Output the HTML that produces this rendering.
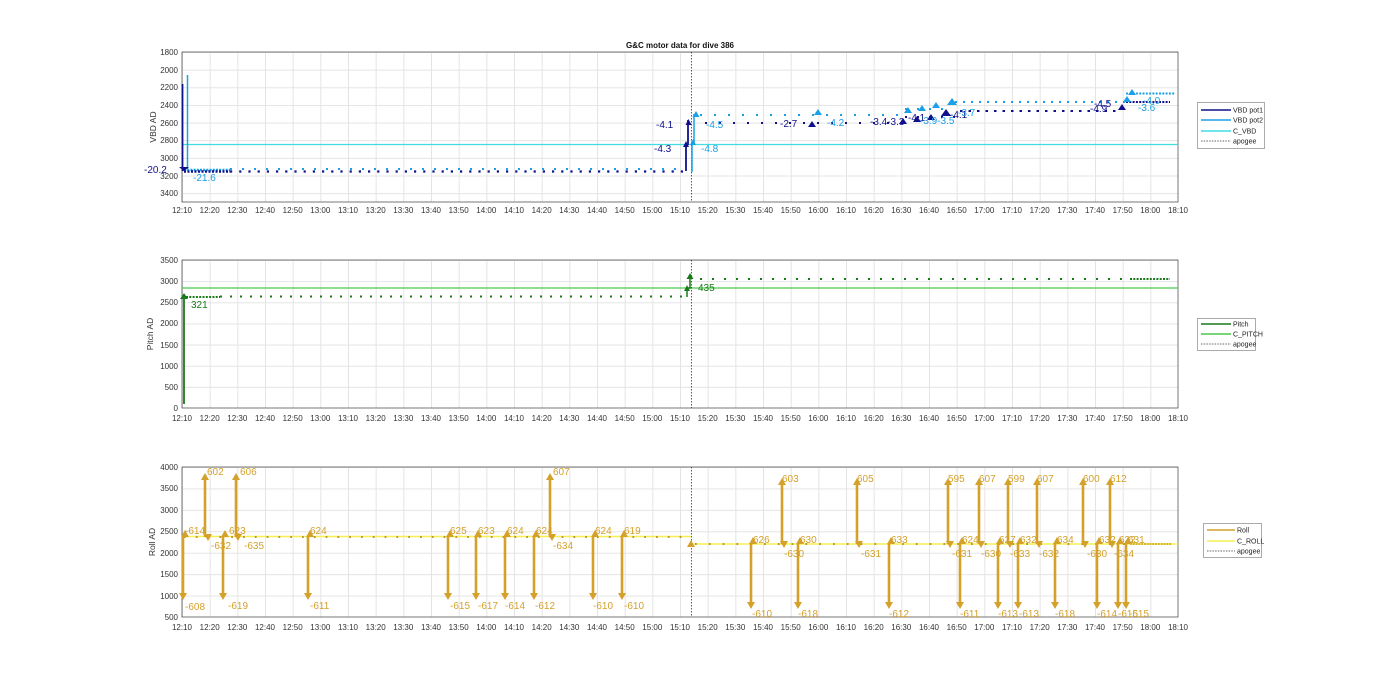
<!DOCTYPE html>
<html><head><meta charset="utf-8"><style>
html,body{margin:0;padding:0;background:#fff;width:1400px;height:693px;overflow:hidden}
svg{display:block;font-family:"Liberation Sans",Arial,sans-serif}
.t{font-size:8px;fill:#333;text-anchor:middle}
.yl{font-size:8px;fill:#333;text-anchor:end}
.lg{font-size:7px;fill:#222}
.gl{font-size:10px;fill:#d4a12a}
</style></head><body>
<svg width="1400" height="693" viewBox="0 0 1400 693">
<defs>
<pattern id="vg" x="182" y="0" width="27.667" height="700" patternUnits="userSpaceOnUse"><line x1="0.5" y1="0" x2="0.5" y2="700" stroke="#e4e4e4" stroke-width="1"/></pattern>
<pattern id="hg1" x="0" y="52" width="1400" height="17.647" patternUnits="userSpaceOnUse"><line x1="0" y1="0.5" x2="1400" y2="0.5" stroke="#e4e4e4"/></pattern>
<pattern id="hg2" x="0" y="260" width="1400" height="21.14" patternUnits="userSpaceOnUse"><line x1="0" y1="0.5" x2="1400" y2="0.5" stroke="#e4e4e4"/></pattern>
<pattern id="hg3" x="0" y="467" width="1400" height="21.43" patternUnits="userSpaceOnUse"><line x1="0" y1="0.5" x2="1400" y2="0.5" stroke="#e4e4e4"/></pattern>
</defs>

<!-- ===== TOP AXES ===== -->
<rect x="182" y="52" width="996" height="150" fill="url(#vg)"/>
<rect x="182" y="52" width="996" height="150" fill="url(#hg1)"/>
<rect x="182" y="52" width="996" height="150" fill="none" stroke="#555" stroke-width="0.8"/>
<text x="680" y="48" font-size="8" font-weight="bold" text-anchor="middle" fill="#111">G&amp;C motor data for dive 386</text>
<g class="yl">
<text x="178" y="55">1800</text><text x="178" y="73">2000</text><text x="178" y="90">2200</text><text x="178" y="108">2400</text><text x="178" y="126">2600</text><text x="178" y="143">2800</text><text x="178" y="161">3000</text><text x="178" y="179">3200</text><text x="178" y="196">3400</text>
</g>
<text transform="translate(156,127) rotate(-90)" font-size="8.5" text-anchor="middle" fill="#333">VBD AD</text>
<g class="t">
<text x="182" y="213">12:10</text><text x="209.7" y="213">12:20</text><text x="237.3" y="213">12:30</text><text x="265" y="213">12:40</text><text x="292.7" y="213">12:50</text><text x="320.3" y="213">13:00</text><text x="348" y="213">13:10</text><text x="375.7" y="213">13:20</text><text x="403.3" y="213">13:30</text><text x="431" y="213">13:40</text><text x="458.7" y="213">13:50</text><text x="486.3" y="213">14:00</text><text x="514" y="213">14:10</text><text x="541.7" y="213">14:20</text><text x="569.3" y="213">14:30</text><text x="597" y="213">14:40</text><text x="624.7" y="213">14:50</text><text x="652.3" y="213">15:00</text><text x="680" y="213">15:10</text><text x="707.7" y="213">15:20</text><text x="735.3" y="213">15:30</text><text x="763" y="213">15:40</text><text x="790.7" y="213">15:50</text><text x="818.3" y="213">16:00</text><text x="846" y="213">16:10</text><text x="873.7" y="213">16:20</text><text x="901.3" y="213">16:30</text><text x="929" y="213">16:40</text><text x="956.7" y="213">16:50</text><text x="984.3" y="213">17:00</text><text x="1012" y="213">17:10</text><text x="1039.7" y="213">17:20</text><text x="1067.3" y="213">17:30</text><text x="1095" y="213">17:40</text><text x="1122.7" y="213">17:50</text><text x="1150.3" y="213">18:00</text><text x="1178" y="213">18:10</text>
</g>
<line x1="182" y1="144.5" x2="1178" y2="144.5" stroke="#40dce0" stroke-width="1.2"/>
<line x1="691.5" y1="52" x2="691.5" y2="202" stroke="#333" stroke-width="0.8" stroke-dasharray="1.5 1.5"/>
<!-- dots -->
<line x1="184" y1="170" x2="230" y2="170" stroke="#1aa0e6" stroke-width="2.5" stroke-dasharray="2 1.2"/>
<line x1="184" y1="171.5" x2="230" y2="171.5" stroke="#10108c" stroke-width="2.5" stroke-dasharray="2 1.5"/>
<line x1="230" y1="169" x2="686" y2="169" stroke="#1aa0e6" stroke-width="2" stroke-dasharray="2 10"/>
<line x1="230" y1="171.5" x2="686" y2="171.5" stroke="#10108c" stroke-width="2.2" stroke-dasharray="2.2 7"/>
<line x1="700" y1="115" x2="905" y2="115" stroke="#1aa0e6" stroke-width="2" stroke-dasharray="2 12"/>
<line x1="905" y1="109" x2="950" y2="109" stroke="#1aa0e6" stroke-width="2" stroke-dasharray="2 10"/>
<line x1="955" y1="102" x2="1126" y2="102" stroke="#1aa0e6" stroke-width="2" stroke-dasharray="2 6"/>
<line x1="1126" y1="93.5" x2="1175" y2="93.5" stroke="#1aa0e6" stroke-width="2" stroke-dasharray="2 1.3"/>
<line x1="705" y1="123" x2="905" y2="123" stroke="#10108c" stroke-width="2" stroke-dasharray="2 12"/>
<line x1="905" y1="117" x2="960" y2="117" stroke="#10108c" stroke-width="2" stroke-dasharray="2 10"/>
<line x1="960" y1="111" x2="1120" y2="111" stroke="#10108c" stroke-width="2" stroke-dasharray="2.5 6"/>
<line x1="1126" y1="102" x2="1170" y2="102" stroke="#10108c" stroke-width="2" stroke-dasharray="2 1.3"/>
<!-- vertical jumps -->
<path d="M182.5 84V171" stroke="#10108c" stroke-width="1.8"/>
<path d="M187.5 75V171" stroke="#1aa0e6" stroke-width="1.5"/>
<path d="M184 171l-5-4h10z" fill="#10108c"/>
<path d="M686 171V144h2V120" stroke="#10108c" stroke-width="1.8" fill="none"/>
<path d="M686 141l-3 6h6zM688.5 119l-3 6h6z" fill="#10108c"/>
<path d="M692 172V142h2V114" stroke="#1aa0e6" stroke-width="1.5" fill="none"/>
<path d="M696 111l-3.5 6h7zM693 139l-3 6h6z" fill="#1aa0e6"/>
<g fill="#10108c"><path d="M812 121l-4 6h8zM903 118l-4 6h8zM917 116l-4 6h8zM931 114l-4 6h8zM946 109l-5 7h10zM1122 104l-4 6h8z"/></g>
<g fill="#1aa0e6"><path d="M818 109l-4 6h8zM908 107l-4 6h8zM922 105l-4 6h8zM936 102l-4 6h8zM952 98l-5 7h10zM1127 96l-4 6h8zM1132 89l-4 6h8z"/></g>
<g font-size="10">
<text x="144" y="173" fill="#10108c">-20.2</text>
<text x="193" y="181" fill="#1aa0e6">-21.6</text>
<text x="656" y="128" fill="#10108c">-4.1</text>
<text x="654" y="152" fill="#10108c">-4.3</text>
<text x="706" y="128" fill="#1aa0e6">-4.5</text>
<text x="701" y="152" fill="#1aa0e6">-4.8</text>
<text x="780" y="127" fill="#10108c">-2.7</text>
<text x="827" y="126" fill="#1aa0e6">-4.2</text>
<text x="870" y="125" fill="#10108c">-3.4-3.3</text>
<text x="908" y="121" fill="#10108c">-4.1</text>
<text x="920" y="124" fill="#1aa0e6">-3.9-3.5</text>
<text x="950" y="118" fill="#10108c">-4.1</text>
<text x="958" y="116" fill="#1aa0e6">-3.7</text>
<text x="1094" y="107" fill="#10108c">-4.5</text>
<text x="1090" y="112" fill="#10108c">-4.9</text>
<text x="1143" y="104" fill="#1aa0e6">-4.0</text>
<text x="1138" y="111" fill="#1aa0e6">-3.6</text>
</g>
<!-- legend 1 -->
<rect x="1197.5" y="102.5" width="67" height="46" fill="#fff" stroke="#888" stroke-width="0.7"/>
<line x1="1201" y1="110" x2="1231" y2="110" stroke="#10108c" stroke-width="1.5"/>
<line x1="1201" y1="120" x2="1231" y2="120" stroke="#1aa0e6" stroke-width="1.5"/>
<line x1="1201" y1="131" x2="1231" y2="131" stroke="#40dce0" stroke-width="1.5"/>
<line x1="1201" y1="141" x2="1231" y2="141" stroke="#333" stroke-width="0.8" stroke-dasharray="1.5 1.2"/>
<text class="lg" x="1233" y="112.5">VBD pot1</text><text class="lg" x="1233" y="122.5">VBD pot2</text><text class="lg" x="1233" y="133.5">C_VBD</text><text class="lg" x="1233" y="143.5">apogee</text>

<!-- ===== MIDDLE AXES ===== -->
<rect x="182" y="260" width="996" height="148" fill="url(#vg)"/>
<rect x="182" y="260" width="996" height="148" fill="url(#hg2)"/>
<rect x="182" y="260" width="996" height="148" fill="none" stroke="#555" stroke-width="0.8"/>
<g class="yl">
<text x="178" y="263">3500</text><text x="178" y="284">3000</text><text x="178" y="305">2500</text><text x="178" y="326">2000</text><text x="178" y="348">1500</text><text x="178" y="369">1000</text><text x="178" y="390">500</text><text x="178" y="411">0</text>
</g>
<text transform="translate(153,334) rotate(-90)" font-size="8.5" text-anchor="middle" fill="#333">Pitch AD</text>
<g class="t">
<text x="182" y="421">12:10</text><text x="209.7" y="421">12:20</text><text x="237.3" y="421">12:30</text><text x="265" y="421">12:40</text><text x="292.7" y="421">12:50</text><text x="320.3" y="421">13:00</text><text x="348" y="421">13:10</text><text x="375.7" y="421">13:20</text><text x="403.3" y="421">13:30</text><text x="431" y="421">13:40</text><text x="458.7" y="421">13:50</text><text x="486.3" y="421">14:00</text><text x="514" y="421">14:10</text><text x="541.7" y="421">14:20</text><text x="569.3" y="421">14:30</text><text x="597" y="421">14:40</text><text x="624.7" y="421">14:50</text><text x="652.3" y="421">15:00</text><text x="680" y="421">15:10</text><text x="707.7" y="421">15:20</text><text x="735.3" y="421">15:30</text><text x="763" y="421">15:40</text><text x="790.7" y="421">15:50</text><text x="818.3" y="421">16:00</text><text x="846" y="421">16:10</text><text x="873.7" y="421">16:20</text><text x="901.3" y="421">16:30</text><text x="929" y="421">16:40</text><text x="956.7" y="421">16:50</text><text x="984.3" y="421">17:00</text><text x="1012" y="421">17:10</text><text x="1039.7" y="421">17:20</text><text x="1067.3" y="421">17:30</text><text x="1095" y="421">17:40</text><text x="1122.7" y="421">17:50</text><text x="1150.3" y="421">18:00</text><text x="1178" y="421">18:10</text>
</g>
<line x1="182" y1="288" x2="1178" y2="288" stroke="#4cc94c" stroke-width="1.2"/>
<line x1="691.5" y1="260" x2="691.5" y2="408" stroke="#333" stroke-width="0.8" stroke-dasharray="1.5 1.5"/>
<line x1="186" y1="297" x2="220" y2="297" stroke="#1a7a1a" stroke-width="2" stroke-dasharray="2 1.3"/>
<line x1="220" y1="296.5" x2="686" y2="296.5" stroke="#1a7a1a" stroke-width="2" stroke-dasharray="2 8"/>
<line x1="700" y1="279" x2="1130" y2="279" stroke="#1a7a1a" stroke-width="2" stroke-dasharray="2 10"/>
<line x1="1130" y1="279" x2="1170" y2="279" stroke="#1a7a1a" stroke-width="2" stroke-dasharray="2 1.3"/>
<path d="M184 404V297" stroke="#1a7a1a" stroke-width="1.8"/>
<path d="M184 293l-4 6h8z" fill="#1a7a1a"/>
<path d="M687 297V288h3V276" stroke="#1a7a1a" stroke-width="1.5" fill="none"/>
<path d="M687 285l-3 6h6zM690 273l-3.5 6h7z" fill="#1a7a1a"/>
<text x="191" y="308" font-size="10" fill="#1a7a1a">321</text>
<text x="698" y="291" font-size="10" fill="#1a7a1a">435</text>
<rect x="1197.5" y="318.5" width="58" height="32" fill="#fff" stroke="#888" stroke-width="0.7"/>
<line x1="1201" y1="324" x2="1231" y2="324" stroke="#1a7a1a" stroke-width="1.5"/>
<line x1="1201" y1="334" x2="1231" y2="334" stroke="#4cc94c" stroke-width="1.5"/>
<line x1="1201" y1="344" x2="1231" y2="344" stroke="#333" stroke-width="0.8" stroke-dasharray="1.5 1.2"/>
<text class="lg" x="1233" y="326.5">Pitch</text><text class="lg" x="1233" y="336.5">C_PITCH</text><text class="lg" x="1233" y="346.5">apogee</text>

<!-- ===== BOTTOM AXES ===== -->
<rect x="182" y="467" width="996" height="150" fill="url(#vg)"/>
<rect x="182" y="467" width="996" height="150" fill="url(#hg3)"/>
<rect x="182" y="467" width="996" height="150" fill="none" stroke="#555" stroke-width="0.8"/>
<g class="yl">
<text x="178" y="470">4000</text><text x="178" y="491">3500</text><text x="178" y="513">3000</text><text x="178" y="534">2500</text><text x="178" y="556">2000</text><text x="178" y="577">1500</text><text x="178" y="599">1000</text><text x="178" y="620">500</text>
</g>
<text transform="translate(155,542) rotate(-90)" font-size="8.5" text-anchor="middle" fill="#333">Roll AD</text>
<g class="t">
<text x="182" y="630">12:10</text><text x="209.7" y="630">12:20</text><text x="237.3" y="630">12:30</text><text x="265" y="630">12:40</text><text x="292.7" y="630">12:50</text><text x="320.3" y="630">13:00</text><text x="348" y="630">13:10</text><text x="375.7" y="630">13:20</text><text x="403.3" y="630">13:30</text><text x="431" y="630">13:40</text><text x="458.7" y="630">13:50</text><text x="486.3" y="630">14:00</text><text x="514" y="630">14:10</text><text x="541.7" y="630">14:20</text><text x="569.3" y="630">14:30</text><text x="597" y="630">14:40</text><text x="624.7" y="630">14:50</text><text x="652.3" y="630">15:00</text><text x="680" y="630">15:10</text><text x="707.7" y="630">15:20</text><text x="735.3" y="630">15:30</text><text x="763" y="630">15:40</text><text x="790.7" y="630">15:50</text><text x="818.3" y="630">16:00</text><text x="846" y="630">16:10</text><text x="873.7" y="630">16:20</text><text x="901.3" y="630">16:30</text><text x="929" y="630">16:40</text><text x="956.7" y="630">16:50</text><text x="984.3" y="630">17:00</text><text x="1012" y="630">17:10</text><text x="1039.7" y="630">17:20</text><text x="1067.3" y="630">17:30</text><text x="1095" y="630">17:40</text><text x="1122.7" y="630">17:50</text><text x="1150.3" y="630">18:00</text><text x="1178" y="630">18:10</text>
</g>
<line x1="182" y1="536.5" x2="691" y2="536.5" stroke="#f5ef50" stroke-width="1.5"/>
<line x1="691" y1="544" x2="1178" y2="544" stroke="#f5ef50" stroke-width="1.5"/>
<line x1="691.5" y1="467" x2="691.5" y2="617" stroke="#333" stroke-width="0.8" stroke-dasharray="1.5 1.5"/>
<line x1="184" y1="537" x2="690" y2="537" stroke="#b89a30" stroke-width="2" stroke-dasharray="1.8 10"/>
<line x1="695" y1="544" x2="1130" y2="544" stroke="#b89a30" stroke-width="2" stroke-dasharray="1.8 12"/>
<line x1="1130" y1="544" x2="1172" y2="544" stroke="#d4b030" stroke-width="2" stroke-dasharray="1.8 1"/>
<g stroke="#d4a12a" stroke-width="2.6" fill="none">
<path d="M183 537V596M205 537V477M223 537V596M236 537V477M308 537V596M448 537V596M476 537V596M505 537V596M534 537V596M550 537V477M593 537V596M622 537V596"/>
<path d="M751 544V605M782 544V482M798 544V605M857 544V482M889 544V605M948 544V482M960 544V605M979 544V482M998 544V605M1008 544V482M1018 544V605M1037 544V482M1055 544V605M1083 544V482M1097 544V605M1110 544V482M1118 544V605M1126 544V605"/>
</g>
<g fill="#d4a12a">
<path d="M183 600l-4-7h8zM205 473l-4 7h8zM223 600l-4-7h8zM236 473l-4 7h8zM308 600l-4-7h8zM448 600l-4-7h8zM476 600l-4-7h8zM505 600l-4-7h8zM534 600l-4-7h8zM550 473l-4 7h8zM593 600l-4-7h8zM622 600l-4-7h8z"/>
<path d="M185 530l-4 7h8zM208 541l-4-7h8zM225 530l-4 7h8zM238 541l-4-7h8zM310 530l-4 7h8zM450 530l-4 7h8zM478 530l-4 7h8zM507 530l-4 7h8zM536 530l-4 7h8zM552 541l-4-7h8zM595 530l-4 7h8zM624 530l-4 7h8zM691 540l-4 7h8z"/>
<path d="M751 609l-4-7h8zM782 478l-4 7h8zM798 609l-4-7h8zM857 478l-4 7h8zM889 609l-4-7h8zM948 478l-4 7h8zM960 609l-4-7h8zM979 478l-4 7h8zM998 609l-4-7h8zM1008 478l-4 7h8zM1018 609l-4-7h8zM1037 478l-4 7h8zM1055 609l-4-7h8zM1083 478l-4 7h8zM1097 609l-4-7h8zM1110 478l-4 7h8zM1118 609l-4-7h8zM1126 609l-4-7h8z"/>
<path d="M753 537l-4 7h8zM784 548l-4-7h8zM800 537l-4 7h8zM859 548l-4-7h8zM891 537l-4 7h8zM950 548l-4-7h8zM962 537l-4 7h8zM981 548l-4-7h8zM1000 537l-4 7h8zM1010 548l-4-7h8zM1020 537l-4 7h8zM1039 548l-4-7h8zM1057 537l-4 7h8zM1085 548l-4-7h8zM1099 537l-4 7h8zM1112 548l-4-7h8zM1120 537l-4 7h8zM1128 537l-4 7h8z"/>
</g>
<g class="gl">
<text x="185" y="534">-614</text><text x="185" y="610">-608</text>
<text x="207" y="475">602</text><text x="211" y="549">-632</text>
<text x="229" y="534">623</text><text x="228" y="609">-619</text>
<text x="240" y="475">606</text><text x="244" y="549">-635</text>
<text x="310" y="534">624</text><text x="310" y="609">-611</text>
<text x="450" y="534">625</text><text x="450" y="609">-615</text>
<text x="478" y="534">623</text><text x="478" y="609">-617</text>
<text x="507" y="534">624</text><text x="505" y="609">-614</text>
<text x="536" y="534">624</text><text x="535" y="609">-612</text>
<text x="553" y="475">607</text><text x="553" y="549">-634</text>
<text x="595" y="534">624</text><text x="593" y="609">-610</text>
<text x="624" y="534">619</text><text x="624" y="609">-610</text>
<text x="753" y="543">626</text><text x="752" y="617">-610</text>
<text x="782" y="482">603</text><text x="784" y="557">-630</text>
<text x="800" y="543">630</text><text x="798" y="617">-618</text>
<text x="857" y="482">605</text><text x="861" y="557">-631</text>
<text x="891" y="543">633</text><text x="889" y="617">-612</text>
<text x="948" y="482">595</text><text x="952" y="557">-631</text>
<text x="962" y="543">624</text><text x="960" y="617">-611</text>
<text x="979" y="482">607</text><text x="981" y="557">-630</text>
<text x="999" y="543">627</text><text x="998" y="617">-613</text>
<text x="1008" y="482">599</text><text x="1010" y="557">-633</text>
<text x="1020" y="543">632</text><text x="1019" y="617">-613</text>
<text x="1037" y="482">607</text><text x="1039" y="557">-632</text>
<text x="1057" y="543">634</text><text x="1055" y="617">-618</text>
<text x="1083" y="482">600</text><text x="1087" y="557">-630</text>
<text x="1099" y="543">632</text><text x="1097" y="617">-614</text>
<text x="1110" y="482">612</text><text x="1114" y="557">-634</text>
<text x="1119" y="543">632</text><text x="1118" y="617">-615</text>
<text x="1128" y="543">631</text><text x="1129" y="617">-615</text>
</g>
<rect x="1203.5" y="523.5" width="58" height="34" fill="#fff" stroke="#888" stroke-width="0.7"/>
<line x1="1207" y1="530" x2="1235" y2="530" stroke="#d4a12a" stroke-width="1.5"/>
<line x1="1207" y1="541" x2="1235" y2="541" stroke="#f5ef50" stroke-width="1.5"/>
<line x1="1207" y1="551" x2="1235" y2="551" stroke="#333" stroke-width="0.8" stroke-dasharray="1.5 1.2"/>
<text class="lg" x="1237" y="532.5">Roll</text><text class="lg" x="1237" y="543.5">C_ROLL</text><text class="lg" x="1237" y="553.5">apogee</text>
</svg>
</body></html>
